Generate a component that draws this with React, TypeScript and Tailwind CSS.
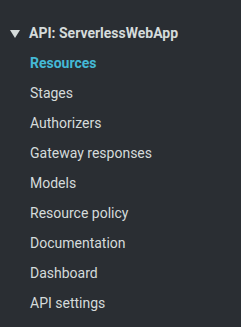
const items = [
  'Resources',
  'Stages',
  'Authorizers',
  'Gateway responses',
  'Models',
  'Resource policy',
  'Documentation',
  'Dashboard',
  'API settings',
];

export default function App() {
  return (
    <div
      className="w-[241px] h-[327px] bg-[#2a2e33] text-[#d5dbdb] text-[14px] overflow-hidden"
      style={{ fontFamily: 'Roboto, "Open Sans", sans-serif' }}
    >
      <div className="pt-[23px] pl-[10px] flex items-center gap-[9px] h-[44px]">
        <svg width="10" height="8" viewBox="0 0 10 8" className="shrink-0 mt-[1px]">
          <polygon points="0,0 10,0 5,8" fill="#d5dbdb" />
        </svg>
        <span className="font-bold">API: ServerlessWebApp</span>
      </div>
      <ul className="pl-[30px] pt-[4px] flex flex-col">
        {items.map((label, i) => (
          <li
            key={label}
            className={`h-[30px] leading-[30px] ${
              i === 0 ? 'text-[#44b9d6] font-bold' : ''
            }`}
          >
            {label}
          </li>
        ))}
      </ul>
    </div>
  );
}
